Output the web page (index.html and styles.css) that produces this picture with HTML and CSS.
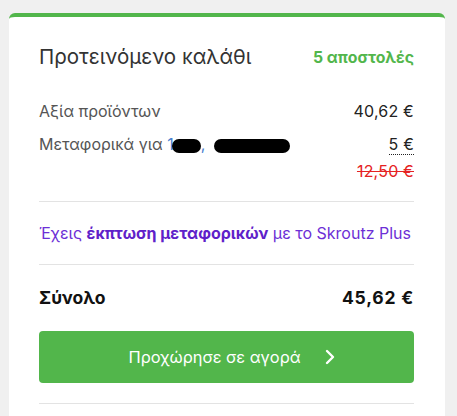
FILE: index.html
```html
<!DOCTYPE html>
<html lang="el">
<head>
<meta charset="utf-8">
<link rel="stylesheet" href="styles.css">
</head>
<body>
<div class="card">
  <div class="header">
    <h2 class="title">Προτεινόμενο καλάθι</h2>
    <span class="shipments">5 αποστολές</span>
  </div>
  <div class="rows">
    <div class="row r1">
      <span class="label">Αξία προϊόντων</span>
      <span class="value">40,62 €</span>
    </div>
    <div class="row r2">
      <span class="label">Μεταφορικά για <span class="link">1<span class="blot b1"></span>, <span class="blot b2"></span></span></span>
      <span class="value dotted">5 €</span>
    </div>
    <div class="row r3">
      <span></span>
      <span class="value old">12,50 €</span>
    </div>
  </div>
  <div class="promo">Έχεις <b>έκπτωση μεταφορικών</b> με το Skroutz Plus</div>
  <div class="total">
    <span>Σύνολο</span>
    <span class="total-value">45,62 €</span>
  </div>
  <button class="cta">Προχώρησε σε αγορά
    <svg class="chev" width="10" height="16" viewBox="0 0 10 16"><path d="M2 2 L8 8 L2 14" fill="none" stroke="#fff" stroke-width="2.4" stroke-linecap="round" stroke-linejoin="round"/></svg>
  </button>
  <div class="bottom-line"></div>
</div>
</body>
</html>
```

FILE: styles.css
```css
html, body {
  margin: 0;
  padding: 0;
  background: #f0f0f0;
}
body {
  padding: 13px 12px 0 9px;
  font-family: "Inter", "Open Sans", sans-serif;
  color: #222;
}
.card {
  background: #fff;
  border-top: 4px solid #52b64b;
  border-radius: 6px 6px 0 0;
  padding: 26px 31px 12px 30px;
}
.header {
  display: flex;
  justify-content: space-between;
  align-items: center;
  height: 28px;
}
.title {
  margin: 0;
  font-weight: 400;
  font-size: 20.5px;
  line-height: 28px;
  color: #333;
}
.shipments {
  color: #52b64b;
  font-weight: 700;
  font-size: 15.8px;
}
.rows {
  margin-top: 29px;
  padding-bottom: 19px;
  border-bottom: 1px solid #e3e3e3;
}
.row {
  display: flex;
  justify-content: space-between;
  align-items: center;
  font-size: 16px;
  line-height: 22px;
}
.r2 { margin-top: 11px; }
.r3 { margin-top: 5px; }
.label { color: #555; }
.value { color: #222; letter-spacing: 0.2px; }
.dotted {
  border-bottom: 1px dotted #222;
  line-height: 20px;
}
.old {
  color: #e52222;
  text-decoration: line-through;
}
.link { color: #4a7fd0; }
.blot {
  display: inline-block;
  background: #000;
  border-radius: 8px;
  vertical-align: -3px;
  height: 14px;
}
.b1 { width: 29px; margin-left: -2px; }
.b2 { width: 76px; margin-left: 4px; }
.promo {
  padding: 20px 0;
  font-size: 16px;
  line-height: 22px;
  color: #6d2fd6;
  border-bottom: 1px solid #e3e3e3;
}
.promo b { font-weight: 700; color: #5e21c9; }
.total {
  display: flex;
  justify-content: space-between;
  margin-top: 21px;
  font-size: 17.5px;
  line-height: 24px;
  font-weight: 700;
  color: #111;
}
.total-value { letter-spacing: 0.8px; }
.cta {
  margin-top: 21px;
  width: 100%;
  height: 52px;
  border: 0;
  border-radius: 4px;
  background: #52b64b;
  color: #fff;
  font-family: inherit;
  font-size: 16.4px;
  display: flex;
  align-items: center;
  justify-content: center;
  gap: 24px;
  padding: 0 0 0 10px;
}
.bottom-line {
  margin-top: 20px;
  border-top: 1px solid #e3e3e3;
}
```
